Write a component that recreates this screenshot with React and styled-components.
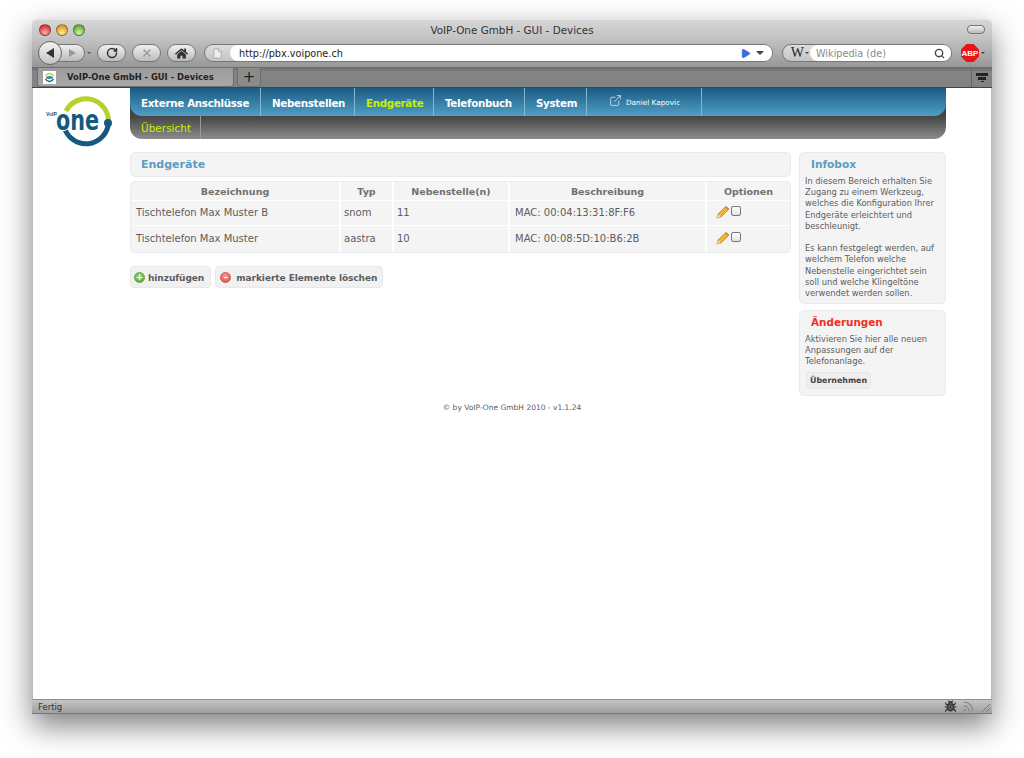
import React from 'react'
import styled, { createGlobalStyle } from 'styled-components'
import { ExternalLink, Rss, Bug, Search, RotateCw, X, File, Play } from 'lucide-react'
import { FaHome } from 'react-icons/fa'

const Global = createGlobalStyle`
  html, body { margin: 0; padding: 0; background: #fff; }
  body { font-family: "DejaVu Sans", "Open Sans", sans-serif; color: #5c5c5c; }
`
const Desk = styled.div`
  width: 1024px;
  height: 758px;
  padding: 19px 32px 0;
  box-sizing: border-box;
  overflow: hidden;
`
const BrowserWindow = styled.div`
  width: 960px;
  height: 695px;
  display: flex;
  flex-direction: column;
  border-radius: 5px 5px 0 0;
  box-shadow: 0 12px 30px rgba(0,0,0,.5);
`
const TitleBar = styled.div`
  height: 20px;
  display: grid;
  grid-template-columns: 1fr auto 1fr;
  align-items: center;
  padding: 0 7px;
  background: linear-gradient(#d6d6d6, #c2c2c2);
  border-top: 1px solid #e4e4e4;
  border-radius: 5px 5px 0 0;
  box-sizing: border-box;
  font-size: 10.4px;
  color: #333;
`
const Lights = styled.div`
  display: flex;
  gap: 5px;
  margin-top: 1px;
`
const Light = styled.span`
  width: 12px;
  height: 12px;
  border-radius: 50%;
  box-sizing: border-box;
  border: 1px solid rgba(0,0,0,.35);
  background: radial-gradient(circle at 50% 80%, ${p => p.$glow} 10%, ${p => p.$c} 75%);
`
const Pill = styled.span`
  justify-self: end;
  width: 16px;
  height: 7px;
  border: 1px solid #777;
  border-radius: 4px;
  background: linear-gradient(#f0f0f0, #bbb);
`
const Toolbar = styled.div`
  height: 29px;
  display: flex;
  align-items: center;
  padding: 0 0 0 6px;
  box-sizing: border-box;
  background: linear-gradient(#c2c2c2, #979797);
  border-bottom: 1px solid #6e6e6e;
`
const BackBtn = styled.span`
  width: 24px;
  height: 24px;
  border-radius: 50%;
  border: 1px solid #666;
  box-sizing: border-box;
  background: linear-gradient(#f4f4f4, #c4c4c4);
  display: flex;
  align-items: center;
  justify-content: center;
  position: relative;
  z-index: 1;
  color: #333;
`
const ForwardBtn = styled.span`
  width: 28px;
  height: 18px;
  margin-left: -5px;
  border: 1px solid #777;
  border-left: 0;
  border-radius: 0 9px 9px 0;
  box-sizing: border-box;
  background: linear-gradient(#eee, #bbb);
  display: flex;
  align-items: center;
  justify-content: center;
  padding-left: 3px;
  color: #999;
`
const Triangle = styled.span`
  width: 0;
  height: 0;
  border-style: solid;
  border-width: ${p => p.$left ? '5px 8px 5px 0' : '4px 0 4px 7px'};
  border-color: transparent ${p => p.$left ? 'currentColor' : 'transparent'} transparent ${p => p.$left ? 'transparent' : 'currentColor'};
`
const TinyDown = styled.span`
  width: 0;
  height: 0;
  margin: ${p => p.$m || '0'};
  border-style: solid;
  border-width: ${p => p.$s || 3}px ${p => p.$s || 3}px 0;
  border-color: ${p => p.$c || '#444'} transparent transparent;
  flex: none;
`
const ToolBtn = styled.span`
  width: ${p => p.$w || 29}px;
  height: 18px;
  margin-left: ${p => p.$ml}px;
  border: 1px solid #777;
  border-radius: 9px;
  box-sizing: border-box;
  background: linear-gradient(#f0f0f0, #bcbcbc);
  display: flex;
  align-items: center;
  justify-content: center;
  color: ${p => p.$c || '#333'};
  flex: none;
`
const UrlBar = styled.div`
  width: 569px;
  height: 18px;
  margin-left: 8px;
  display: flex;
  border: 1px solid #777;
  border-radius: 9px;
  box-sizing: border-box;
  background: linear-gradient(#ddd, #c4c4c4);
  flex: none;
`
const SiteIcon = styled.span`
  width: 25px;
  display: flex;
  align-items: center;
  justify-content: center;
  color: #aaa;
  flex: none;
`
const UrlField = styled.div`
  flex: 1;
  display: flex;
  align-items: center;
  gap: 5px;
  padding: 0 6px 0 9px;
  background: #fff;
  border-radius: 9px;
  font-size: 9.7px;
  color: #222;
`
const UrlText = styled.span`
  flex: 1;
`
const SearchBar = styled(UrlBar)`
  width: 170px;
  margin-left: 9px;
`
const Engine = styled.span`
  width: 27px;
  display: flex;
  align-items: center;
  justify-content: flex-end;
  gap: 1px;
  padding-right: 1px;
  box-sizing: border-box;
  font-family: "Liberation Serif", serif;
  font-size: 14px;
  color: #222;
  flex: none;
`
const Placeholder = styled.span`
  flex: 1;
  color: #8a8a8a;
`
const SearchField = styled(UrlField)`
  padding-left: 6px;
`
const Abp = styled.span`
  width: 18px;
  height: 18px;
  margin-left: 9px;
  clip-path: polygon(30% 0, 70% 0, 100% 30%, 100% 70%, 70% 100%, 30% 100%, 0 70%, 0 30%);
  background: #e8141a;
  color: #fff;
  font: bold 8px "Liberation Sans", sans-serif;
  display: flex;
  align-items: center;
  justify-content: center;
  flex: none;
`
const TabBar = styled.div`
  height: 20px;
  display: flex;
  padding-left: 5px;
  background: linear-gradient(#6d6d6d, #848484 20%, #828282);
  border-bottom: 1px solid #444;
  box-sizing: border-box;
`
const Tab = styled.div`
  width: 197px;
  height: 19px;
  display: flex;
  align-items: center;
  gap: 11px;
  padding-left: 5px;
  box-sizing: border-box;
  background: linear-gradient(#9c9c9c, #a8a8a8);
  border: 1px solid #6e6e6e;
  border-top: 0;
  border-radius: 0 0 4px 4px;
  font-size: 8.4px;
  font-weight: 600;
  color: #222;
`
const Favicon = styled.span`
  width: 13px;
  height: 13px;
  background: #fff;
  display: flex;
  flex: none;
`
const PlusTab = styled(Tab)`
  width: 24px;
  margin-left: 3px;
  padding: 0;
  justify-content: center;
  background: #8b8b8b;
  font-size: 15px;
  font-weight: 400;
  color: #222;
`
const ListTab = styled.div`
  margin-left: auto;
  width: 20px;
  border-left: 1px solid #666;
  display: flex;
  flex-direction: column;
  align-items: center;
  justify-content: center;
  gap: 1px;
`
const ListBar = styled.span`
  width: ${p => p.$w}px;
  height: ${p => p.$h}px;
  background: #222;
`
const Content = styled.div`
  height: 611px;
  display: flex;
  background: #fff;
  border-left: 1px solid #bbb;
  border-right: 1px solid #bbb;
  box-sizing: border-box;
`
const LogoCol = styled.div`
  width: 97px;
  padding: 5px 0 0 11px;
  box-sizing: border-box;
  flex: none;
`
const PageCol = styled.div`
  width: 816px;
  flex: none;
`
const Nav = styled.div`
  background: linear-gradient(#444 55%, #8c8c8c);
  border-radius: 0 0 12px 12px;
  height: 51px;
`
const NavTop = styled.div`
  height: 28px;
  display: flex;
  background: linear-gradient(#1c5a83, #4f9fc4);
  border-radius: 0 0 12px 12px;
`
const NavItem = styled.a`
  width: ${p => p.$w}px;
  display: flex;
  align-items: center;
  padding: 1px 0 0 ${p => p.$pl || 11}px;
  box-sizing: border-box;
  border-right: 1px solid #85b6cf;
  font-size: 10.3px;
  letter-spacing: -.3px;
  white-space: nowrap;
  font-weight: 700;
  color: ${p => p.$active ? '#c8f000' : '#fff'};
`
const UserLink = styled.span`
  display: flex;
  align-items: center;
  gap: 4px;
  font-size: 7.3px;
  letter-spacing: 0;
  font-weight: 400;
`
const UserIcon = styled.span`
  display: flex;
  margin-top: -5px;
`
const NavSub = styled.div`
  height: 23px;
  display: flex;
`
const SubItem = styled.a`
  width: 71px;
  padding-left: 11px;
  box-sizing: border-box;
  border-right: 1px solid #999;
  display: flex;
  align-items: center;
  font-size: 10.5px;
  color: #c8f000;
`
const Columns = styled.div`
  display: flex;
  gap: 8px;
  margin-top: 13px;
  align-items: flex-start;
`
const MainCol = styled.div`
  width: 661px;
  flex: none;
`
const SideCol = styled.div`
  width: 147px;
  flex: none;
  display: flex;
  flex-direction: column;
  gap: 6px;
`
const HeadBox = styled.div`
  height: 25px;
  display: flex;
  align-items: center;
  padding-left: 10px;
  background: #f4f4f4;
  border: 1px solid #ebebeb;
  border-radius: 5px;
  box-sizing: border-box;
`
const Heading = styled.h2`
  margin: 0;
  font-size: ${p => p.$size || 11}px;
  font-weight: 700;
  color: ${p => p.$c || '#5a9dc0'};
`
const Table = styled.table`
  width: 661px;
  margin-top: 4px;
  border-collapse: separate;
  border-spacing: 0;
  table-layout: fixed;
  background: #f4f4f4;
  border: 1px solid #ebebeb;
  border-radius: 5px;
  font-size: 10px;
`
const Th = styled.th`
  height: 18px;
  padding: 0;
  width: ${p => p.$w}px;
  font-size: 9.5px;
  font-weight: 700;
  color: #707070;
  border-right: 2px solid #fff;
  border-bottom: 1px solid #fff;
  &:last-child { border-right: 0; }
`
const Td = styled.td`
  height: 25px;
  padding: 0 0 2px ${p => p.$pl || 5}px;
  box-sizing: border-box;
  border-right: 2px solid #fff;
  border-bottom: 1px solid #fff;
  &:last-child { border-right: 0; }
  tr:last-child & { border-bottom: 0; height: 26px; }
`
const Options = styled.span`
  display: flex;
  align-items: center;
  gap: 1px;
  padding-left: 4px;
`
const CheckBox = styled.span`
  width: 10px;
  height: 10px;
  border: 1px solid #777;
  border-radius: 2px;
  background: linear-gradient(#fff, #e0e0e0);
  box-sizing: border-box;
  margin-top: -3px;
`
const Actions = styled.div`
  display: flex;
  gap: 4px;
  margin-top: 13px;
`
const ActionBtn = styled.a`
  height: 22px;
  display: flex;
  align-items: center;
  gap: ${p => p.$gap}px;
  padding: 1px ${p => p.$pr}px 0 ${p => p.$pl}px;
  background: #f1f1f1;
  border: 1px solid #e8e8e8;
  border-radius: 4px;
  box-sizing: border-box;
  font-size: 9px;
  letter-spacing: -.06px;
  font-weight: 600;
`
const RoundIcon = styled.span`
  width: 11px;
  height: 11px;
  border-radius: 50%;
  background: radial-gradient(circle at 50% 30%, ${p => p.$a}, ${p => p.$b});
  border: 1px solid ${p => p.$b};
  box-sizing: border-box;
  color: #fff;
  display: flex;
  align-items: center;
  justify-content: center;
  font-size: 9px;
  font-weight: 700;
  line-height: 1;
  flex: none;
`
const SideBox = styled.div`
  background: #f4f4f4;
  border: 1px solid #ebebeb;
  border-radius: 5px;
  box-sizing: border-box;
  padding: 5px 5px 4px;
  height: ${p => p.$h}px;
`
const SideHead = styled(Heading)`
  padding-left: 6px;
  margin-bottom: 6px;
`
const SideText = styled.p`
  margin: 0;
  font-size: 8.3px;
  line-height: 11.2px;
`
const Apply = styled.a`
  display: inline-block;
  margin: 4px 0 0 1px;
  padding: 3px 3px;
  background: #eee;
  border: 1px solid #e6e6e6;
  border-radius: 3px;
  font-size: 7.9px;
  font-weight: 600;
  color: #444;
`
const Copyright = styled.div`
  width: 764px;
  margin-top: 7px;
  text-align: center;
  font-size: 7.5px;
`
const StatusBar = styled.div`
  height: 15px;
  display: flex;
  align-items: center;
  gap: 5px;
  padding: 0 2px 0 6px;
  background: linear-gradient(#c4c4c4, #a0a0a0);
  border-top: 1px solid #909090;
  border-bottom: 1px solid #777;
  box-sizing: border-box;
  font-size: 8.5px;
  color: #333;
`
const StatusText = styled.span`
  flex: 1;
`
const Grip = styled.span`
  width: 10px;
  height: 10px;
  background: repeating-linear-gradient(135deg, transparent 0 2px, #777 2px 3px);
  clip-path: polygon(100% 0, 100% 100%, 0 100%);
`

const Logo = () => (
  <svg width="84" height="56" viewBox="0 0 84 56">
    <path d="M22 18 A 22.5 22.5 0 0 1 64.5 28" fill="none" stroke="#b9cf2a" strokeWidth="5" />
    <path d="M64.5 28 A 22.5 22.5 0 0 1 20 33" fill="none" stroke="#14597f" strokeWidth="5" />
    <circle cx="64" cy="30" r="4" fill="#14597f" />
    <text x="12" y="37" fontFamily="DejaVu Sans" fontWeight="700" fontSize="29" textLength="43" lengthAdjust="spacingAndGlyphs" stroke="#fff" strokeWidth="2" paintOrder="stroke" fill="#14597f">one</text>
    <text x="2" y="23" fontFamily="Liberation Sans" fontWeight="700" fontSize="5" fill="#14597f">VoIP</text>
  </svg>
)

const Pencil = () => (
  <svg width="14" height="14" viewBox="0 0 14 14">
    <path d="M1 13 L2 9 L10 1.5 L13 4 L5 12 Z" fill="#f2b632" stroke="#b9791a" strokeWidth=".8" />
    <path d="M1 13 L2 9 L5 12 Z" fill="#f3d9a8" />
    <path d="M9.5 2 L12.5 4.5" stroke="#e07b52" strokeWidth="1.5" />
  </svg>
)

const rows = [
  { name: 'Tischtelefon Max Muster B', typ: 'snom', ext: '11', mac: 'MAC: 00:04:13:31:8F:F6' },
  { name: 'Tischtelefon Max Muster', typ: 'aastra', ext: '10', mac: 'MAC: 00:08:5D:10:B6:2B' },
]

export default function App() {
  return (
    <Desk>
      <Global />
      <BrowserWindow>
        <TitleBar>
          <Lights>
            <Light $c="#d8353a" $glow="#f7a0a0" />
            <Light $c="#e09a20" $glow="#fbe08a" />
            <Light $c="#62ad3a" $glow="#c5ec9a" />
          </Lights>
          <span>VoIP-One GmbH - GUI - Devices</span>
          <Pill />
        </TitleBar>
        <Toolbar>
          <BackBtn><Triangle $left /></BackBtn>
          <ForwardBtn><Triangle /></ForwardBtn>
          <TinyDown $m="0 0 0 2px" $c="#555" $s={2.5} />
          <ToolBtn $ml={6}><RotateCw size={12} strokeWidth={3} /></ToolBtn>
          <ToolBtn $ml={6} $c="#999"><X size={12} strokeWidth={3} /></ToolBtn>
          <ToolBtn $ml={6}><FaHome size={13} /></ToolBtn>
          <UrlBar>
            <SiteIcon><File size={11} fill="#eee" /></SiteIcon>
            <UrlField>
              <UrlText>http://pbx.voipone.ch</UrlText>
              <Play size={11} color="#3c6be0" fill="#3c6be0" />
              <TinyDown $s={4} $m="0 2px 0 0" />
            </UrlField>
          </UrlBar>
          <SearchBar>
            <Engine>W<TinyDown $s={2} /></Engine>
            <SearchField>
              <Placeholder>Wikipedia (de)</Placeholder>
              <Search size={11} strokeWidth={3} color="#444" />
            </SearchField>
          </SearchBar>
          <Abp>ABP</Abp>
          <TinyDown $m="0 0 0 2px" $s={2} />
        </Toolbar>
        <TabBar>
          <Tab>
            <Favicon>
              <svg width="13" height="13" viewBox="0 0 13 13">
                <path d="M2.5 5 A 4.5 4.5 0 0 1 10.5 5" fill="none" stroke="#b9cf2a" strokeWidth="1.4" />
                <path d="M10.5 8 A 4.5 4.5 0 0 1 2.5 8" fill="none" stroke="#14597f" strokeWidth="1.4" />
                <ellipse cx="6.5" cy="6.5" rx="3.5" ry="1.5" fill="#3a8aa8" />
              </svg>
            </Favicon>
            VoIP-One GmbH - GUI - Devices
          </Tab>
          <PlusTab>+</PlusTab>
          <ListTab>
            <ListBar $w={12} $h={3} />
            <ListBar $w={8} $h={3} />
            <ListBar $w={3} $h={1} />
          </ListTab>
        </TabBar>
        <Content>
          <LogoCol><Logo /></LogoCol>
          <PageCol>
            <Nav>
              <NavTop>
                <NavItem $w={131}>Externe Anschlüsse</NavItem>
                <NavItem $w={94}>Nebenstellen</NavItem>
                <NavItem $w={79} $active>Endgeräte</NavItem>
                <NavItem $w={91}>Telefonbuch</NavItem>
                <NavItem $w={62}>System</NavItem>
                <NavItem $w={115} $pl={22}>
                  <UserLink>
                    <UserIcon><ExternalLink size={13} strokeWidth={1.2} /></UserIcon>
                    Daniel Kapovic
                  </UserLink>
                </NavItem>
              </NavTop>
              <NavSub><SubItem>Übersicht</SubItem></NavSub>
            </Nav>
            <Columns>
              <MainCol>
                <HeadBox><Heading>Endgeräte</Heading></HeadBox>
                <Table>
                  <thead>
                    <tr>
                      <Th $w={208}>Bezeichnung</Th>
                      <Th $w={51}>Typ</Th>
                      <Th $w={114}>Nebenstelle(n)</Th>
                      <Th $w={195}>Beschreibung</Th>
                      <Th>Optionen</Th>
                    </tr>
                  </thead>
                  <tbody>
                    {rows.map(r => (
                      <tr key={r.mac}>
                        <Td>{r.name}</Td>
                        <Td $pl={3}>{r.typ}</Td>
                        <Td $pl={3}>{r.ext}</Td>
                        <Td>{r.mac}</Td>
                        <Td><Options><Pencil /><CheckBox /></Options></Td>
                      </tr>
                    ))}
                  </tbody>
                </Table>
                <Actions>
                  <ActionBtn $gap={3} $pl={3} $pr={6}>
                    <RoundIcon $a="#9ad27e" $b="#5aa33e">+</RoundIcon>hinzufügen
                  </ActionBtn>
                  <ActionBtn $gap={5} $pl={4} $pr={5}>
                    <RoundIcon $a="#f09a90" $b="#d8504a">–</RoundIcon>markierte Elemente löschen
                  </ActionBtn>
                </Actions>
              </MainCol>
              <SideCol>
                <SideBox $h={152}>
                  <SideHead $size={10.6}>Infobox</SideHead>
                  <SideText>
                    In diesem Bereich erhalten Sie<br />
                    Zugang zu einem Werkzeug,<br />
                    welches die Konfiguration Ihrer<br />
                    Endgeräte erleichtert und<br />
                    beschleunigt.<br /><br />
                    Es kann festgelegt werden, auf<br />
                    welchem Telefon welche<br />
                    Nebenstelle eingerichtet sein<br />
                    soll und welche Klingeltöne<br />
                    verwendet werden sollen.
                  </SideText>
                </SideBox>
                <SideBox $h={86}>
                  <SideHead $size={10.4} $c="#f0301e">Änderungen</SideHead>
                  <SideText>
                    Aktivieren Sie hier alle neuen<br />
                    Anpassungen auf der<br />
                    Telefonanlage.
                  </SideText>
                  <Apply>Übernehmen</Apply>
                </SideBox>
              </SideCol>
            </Columns>
            <Copyright>© by VoIP-One GmbH 2010 - v1.1.24</Copyright>
          </PageCol>
        </Content>
        <StatusBar>
          <StatusText>Fertig</StatusText>
          <Bug size={13} color="#333" fill="#555" />
          <Rss size={13} color="#8a8a8a" strokeWidth={2.5} />
          <Grip />
        </StatusBar>
      </BrowserWindow>
    </Desk>
  )
}
